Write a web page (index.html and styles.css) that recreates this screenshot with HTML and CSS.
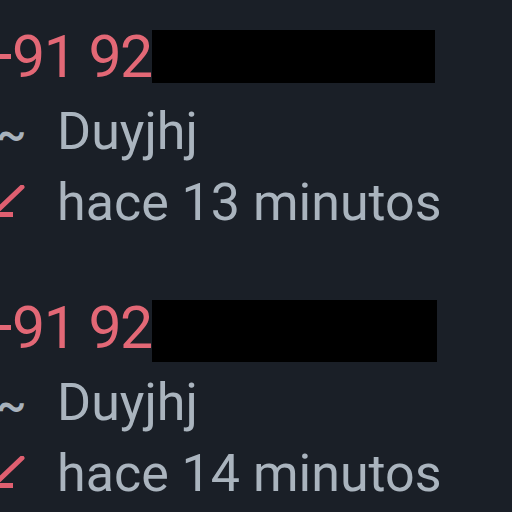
FILE: index.html
```html
<!DOCTYPE html>
<html lang="es">
<head>
<meta charset="utf-8">
<link rel="stylesheet" href="styles.css">
</head>
<body>
<div class="list">
  <div class="entry">
    <div class="num"><span class="digits">+91 92</span><span class="redact"></span></div>
    <div class="line name"><span class="ico tilde">~</span><span class="txt">Duyjhj</span></div>
    <div class="line"><span class="ico"><svg width="32" height="36" viewBox="0 0 32 36"><path d="M22 2 L-1 24" stroke="#df5f70" stroke-width="5" stroke-linecap="round" fill="none"/><path d="M-3 29.5 L13 29.5" stroke="#df5f70" stroke-width="5" fill="none"/></svg></span><span class="txt">hace 13 minutos</span></div>
  </div>
  <div class="entry">
    <div class="num"><span class="digits">+91 92</span><span class="redact tall"></span></div>
    <div class="line name"><span class="ico tilde">~</span><span class="txt">Duyjhj</span></div>
    <div class="line"><span class="ico"><svg width="32" height="36" viewBox="0 0 32 36"><path d="M22 2 L-1 24" stroke="#df5f70" stroke-width="5" stroke-linecap="round" fill="none"/><path d="M-3 29.5 L13 29.5" stroke="#df5f70" stroke-width="5" fill="none"/></svg></span><span class="txt">hace 14 minutos</span></div>
  </div>
</div>
</body>
</html>
```
FILE: styles.css
```css
html, body {
  margin: 0;
  padding: 0;
  background: #1a1f27;
  width: 512px;
  height: 512px;
  overflow: hidden;
}
.list {
  display: flex;
  flex-direction: column;
  gap: 54px;
  padding-top: 21px;
  font-family: Roboto, "Noto Sans", sans-serif;
}
.entry {
  display: flex;
  flex-direction: column;
}
.num {
  display: flex;
  align-items: center;
  height: 70px;
  margin-left: -20px;
  margin-bottom: 5px;
}
.digits {
  color: #e36876;
  font-size: 59px;
  letter-spacing: -1.5px;
  line-height: 1;
}
.redact {
  display: inline-block;
  width: 283px;
  height: 53px;
  background: #000;
}
.redact.tall {
  width: 285px;
  height: 62px;
  align-self: flex-start;
  margin-top: 8px;
}
.line {
  display: flex;
  align-items: center;
  height: 70px;
}
.line.name {
  height: 72px;
}
.ico {
  width: 57px;
  flex: none;
  display: flex;
  align-items: center;
}
.tilde {
  color: #a8b2bc;
  font-size: 46px;
  font-weight: 500;
  margin-left: -4px;
  margin-top: 4px;
  width: 61px;
}
.txt {
  color: #aab4be;
  font-size: 52px;
  line-height: 1;
}
```
